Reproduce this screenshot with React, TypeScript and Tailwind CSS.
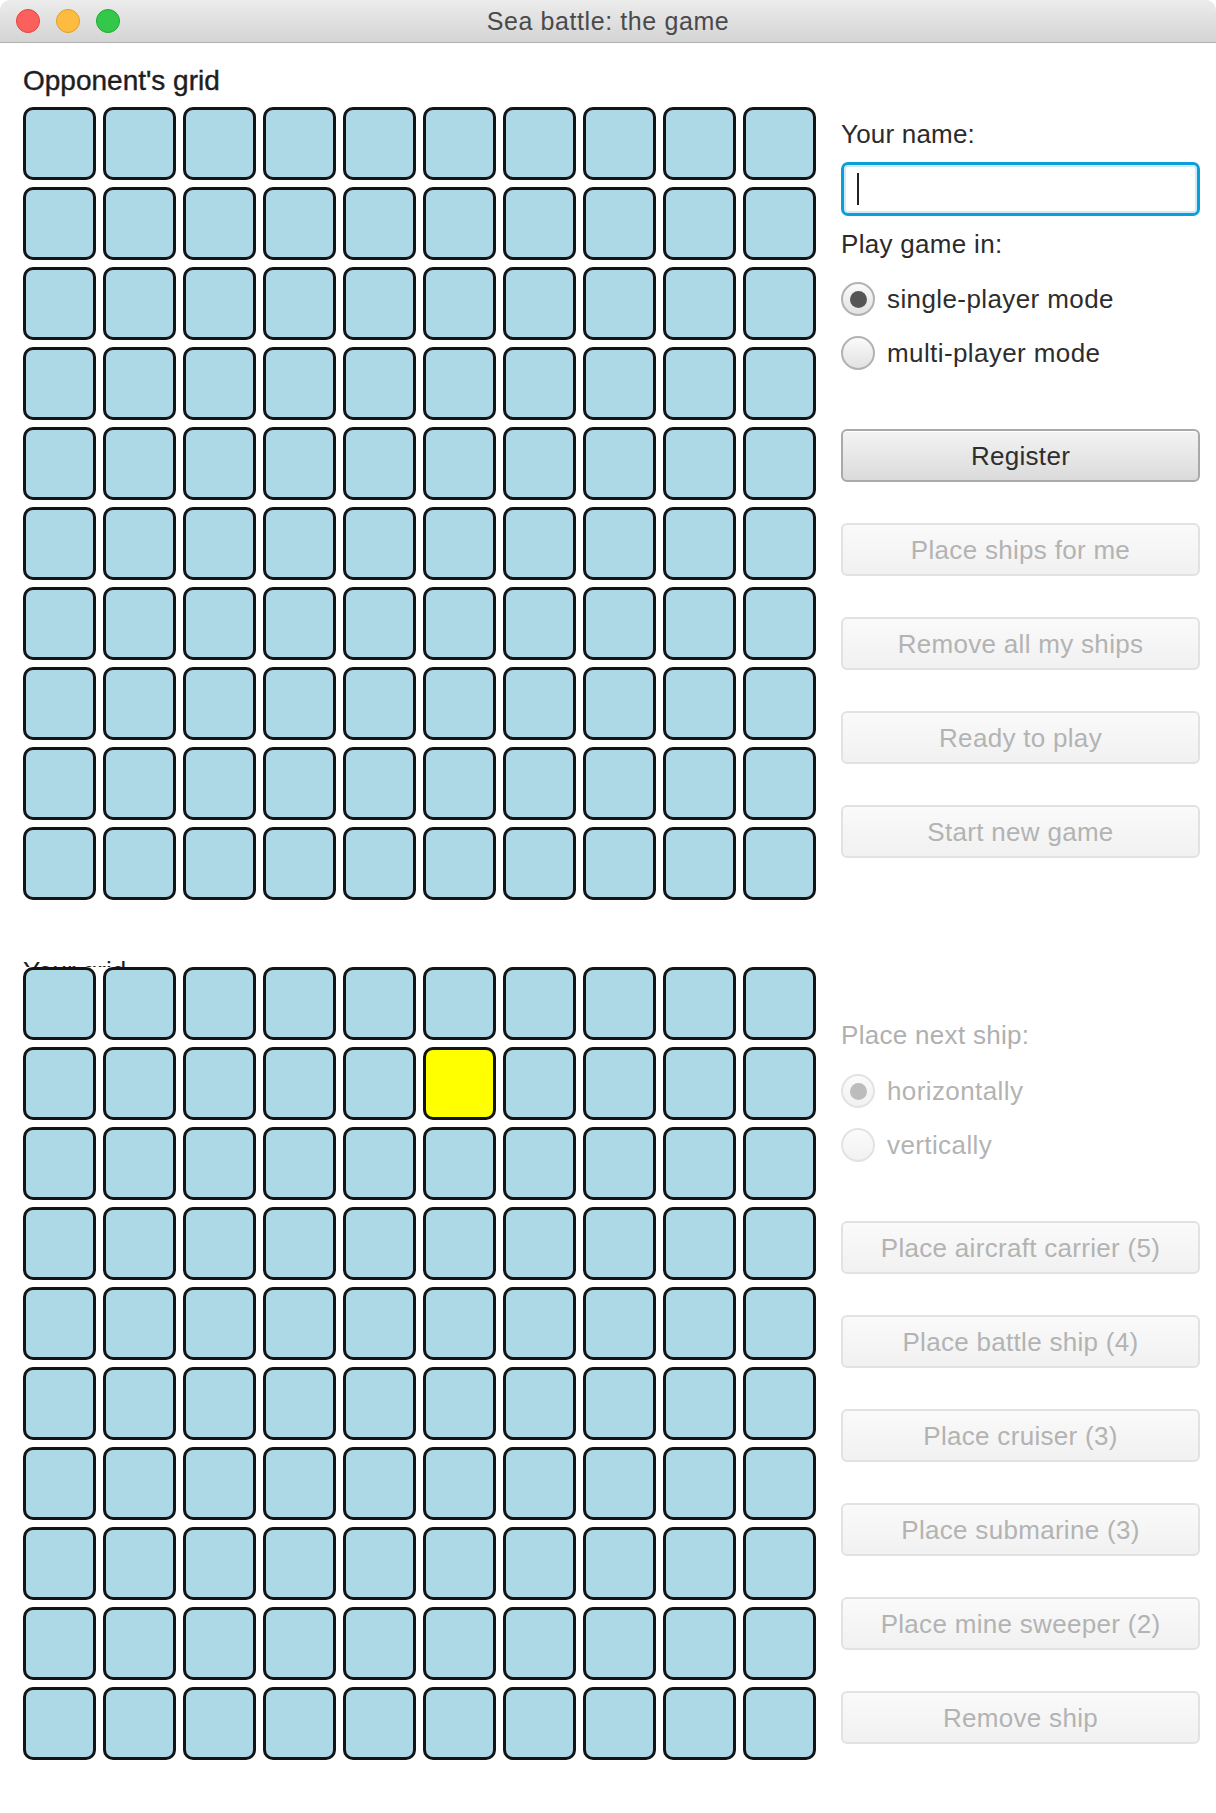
import clsx from 'clsx';

const FONT = "font-['Liberation_Sans',Arial,sans-serif]";

/** One square of a 10x10 board */
function Cell({ marked }: { marked?: boolean }) {
  return (
    <div
      className={clsx(
        'h-[73px] w-[73px] rounded-[10px] border-[3px] border-[#141414]',
        marked ? 'bg-[#ffff00]' : 'bg-[#add8e6]',
      )}
    />
  );
}

function Board({ mark }: { mark?: [number, number] }) {
  return (
    <div className="grid grid-cols-[repeat(10,73px)] gap-[7px]">
      {Array.from({ length: 100 }, (_, i) => {
        const r = Math.floor(i / 10);
        const c = i % 10;
        return <Cell key={i} marked={!!mark && mark[0] === r && mark[1] === c} />;
      })}
    </div>
  );
}

function Radio({ label, checked, disabled }: { label: string; checked?: boolean; disabled?: boolean }) {
  return (
    <div className="flex h-[34px] items-center gap-[12px]">
      <span
        className={clsx(
          'grid h-[34px] w-[34px] shrink-0 place-items-center rounded-full border-2',
          disabled
            ? 'border-[#e3e3e3] bg-linear-to-b from-[#fbfbfb] to-[#f1f1f1]'
            : 'border-[#b2b2b2] bg-linear-to-b from-[#fafafa] to-[#e2e2e2]',
        )}
      >
        {checked && (
          <span className={clsx('h-[17px] w-[17px] rounded-full', disabled ? 'bg-[#bcbcbc]' : 'bg-[#555555]')} />
        )}
      </span>
      <span className={clsx('text-[26px] leading-[30px] tracking-[0.4px]', disabled ? 'text-[#b3b3b3]' : 'text-[#2d2d2d]')}>
        {label}
      </span>
    </div>
  );
}

function Btn({ label, disabled }: { label: string; disabled?: boolean }) {
  return (
    <button
      type="button"
      disabled={disabled}
      className={clsx(
        'flex h-[53px] w-full items-center justify-center rounded-[6px] border-2 text-[26px] leading-[30px] tracking-[0.3px]',
        disabled
          ? 'border-[#e2e2e2] bg-linear-to-b from-[#fafafa] to-[#f1f1f1] text-[#b3b3b3]'
          : 'border-[#a9a9a9] bg-linear-to-b from-[#f3f3f3] to-[#dbdbdb] text-[#2e2e2e] shadow-[inset_0_1px_0_#ffffff]',
      )}
    >
      {label}
    </button>
  );
}

function TitleBar() {
  return (
    <header className="grid h-[43px] grid-cols-[1fr_auto_1fr] items-center rounded-t-[10px] border-b border-[#b1b1b1] bg-linear-to-b from-[#ececec] to-[#d4d4d4]">
      <div className="flex items-center gap-[16px] pl-[16px]">
        <span className="h-[24px] w-[24px] rounded-full border border-[#e0443e] bg-[#fc605c]" />
        <span className="h-[24px] w-[24px] rounded-full border border-[#dea123] bg-[#fdbc40]" />
        <span className="h-[24px] w-[24px] rounded-full border border-[#1aab29] bg-[#34c84a]" />
      </div>
      <h1 className="text-[25px] leading-[30px] tracking-[0.6px] text-[#4a4a4a]">Sea battle: the game</h1>
      <div />
    </header>
  );
}

export default function App() {
  return (
    <div className={clsx(FONT, 'h-[1813px] w-[1216px] overflow-hidden bg-white')}>
      <TitleBar />
      <main className="flex gap-[25px] pl-[23px]">
        {/* Левая колонка: две доски */}
        <div className="flex w-[793px] flex-col pb-[53px]">
          <div className="mt-[22px] text-[28px] leading-[32px] text-[#1e1e1e] [-webkit-text-stroke:0.4px_#1e1e1e]">
            Opponent's grid
          </div>
          <div className="mt-[10px]">
            <Board />
          </div>
          {/* подпись нижней доски перекрыта сеткой, видны только верхушки букв */}
          <div className="mt-[56px] h-[11px] overflow-hidden text-[26px] leading-[30px] text-[#1e1e1e]">Your grid</div>
          <Board mark={[1, 5]} />
        </div>

        {/* Правая колонка: управление */}
        <div className="flex w-[359px] flex-col">
          <div className="mt-[76px] text-[26px] leading-[30px] tracking-[0.2px] text-[#2b2b2b]">Your name:</div>
          <div className="mt-[13px] flex h-[54px] items-center rounded-[7px] border-[3px] border-[#0a9fd8] bg-white pl-[13px] shadow-[inset_0_0_0_2px_#cdebf8]">
            <span className="h-[32px] w-[2px] bg-[#222]" />
          </div>
          <div className="mt-[13px] text-[26px] leading-[30px] tracking-[0.3px] text-[#2b2b2b]">Play game in:</div>
          <div className="mt-[23px]">
            <Radio label="single-player mode" checked />
          </div>
          <div className="mt-[20px]">
            <Radio label="multi-player mode" />
          </div>

          <div className="mt-[59px] flex flex-col gap-[41px]">
            <Btn label="Register" />
            <Btn label="Place ships for me" disabled />
            <Btn label="Remove all my ships" disabled />
            <Btn label="Ready to play" disabled />
            <Btn label="Start new game" disabled />
          </div>

          <div className="mt-[162px] text-[26px] leading-[30px] tracking-[0.3px] text-[#b0b0b0]">Place next ship:</div>
          <div className="mt-[24px]">
            <Radio label="horizontally" checked disabled />
          </div>
          <div className="mt-[20px]">
            <Radio label="vertically" disabled />
          </div>

          <div className="mt-[59px] flex flex-col gap-[41px]">
            <Btn label="Place aircraft carrier (5)" disabled />
            <Btn label="Place battle ship (4)" disabled />
            <Btn label="Place cruiser (3)" disabled />
            <Btn label="Place submarine (3)" disabled />
            <Btn label="Place mine sweeper (2)" disabled />
            <Btn label="Remove ship" disabled />
          </div>
        </div>
      </main>
    </div>
  );
}
